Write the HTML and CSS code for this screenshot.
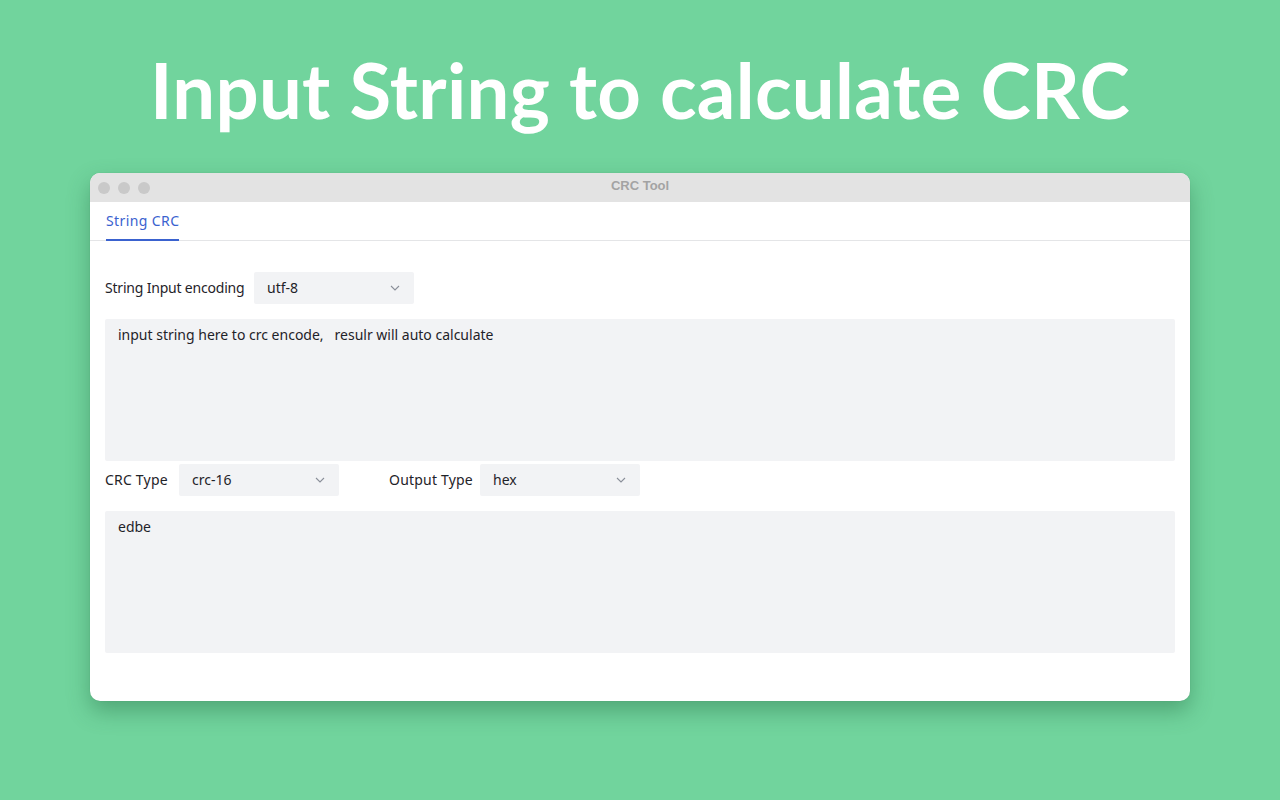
FILE: index.html
```html
<!DOCTYPE html>
<html>
<head>
<meta charset="utf-8">
<link rel="stylesheet" href="styles.css">
</head>
<body>
<div class="page">
  <h1 class="headline">Input String to calculate CRC</h1>
  <div class="window">
    <div class="titlebar">
      <div class="lights"><span class="light"></span><span class="light"></span><span class="light"></span></div>
      <div class="title">CRC Tool</div>
    </div>
    <div class="tabs">
      <div class="tab active">String CRC</div>
    </div>
    <div class="content">
      <div class="row row-first">
        <span class="label label-enc">String Input encoding</span>
        <div class="select"><span>utf-8</span>
          <svg class="chev" width="10" height="6" viewBox="0 0 10 6"><path d="M1 1l4 4 4-4" fill="none" stroke="#8a8f99" stroke-width="1.1"/></svg>
        </div>
      </div>
      <div class="area area-input">input string here to crc encode,&nbsp;&nbsp;&nbsp;resulr will auto calculate</div>
      <div class="row row-second">
        <span class="label label-crc">CRC Type</span>
        <div class="select"><span>crc-16</span>
          <svg class="chev" width="10" height="6" viewBox="0 0 10 6"><path d="M1 1l4 4 4-4" fill="none" stroke="#8a8f99" stroke-width="1.1"/></svg>
        </div>
        <span class="label label-out">Output Type</span>
        <div class="select"><span>hex</span>
          <svg class="chev" width="10" height="6" viewBox="0 0 10 6"><path d="M1 1l4 4 4-4" fill="none" stroke="#8a8f99" stroke-width="1.1"/></svg>
        </div>
      </div>
      <div class="area area-output">edbe</div>
    </div>
  </div>
</div>
</body>
</html>
```

FILE: styles.css
```css
* { box-sizing: border-box; }
html, body { margin: 0; padding: 0; }
body {
  width: 1280px;
  height: 800px;
  background: #71d49d;
  font-family: "Noto Sans", "Liberation Sans", sans-serif;
  overflow: hidden;
}
.page {
  display: flex;
  flex-direction: column;
  align-items: center;
}
.headline {
  margin: 44px 0 0 0;
  height: 129px;
  font-family: Lato, "Noto Sans", sans-serif;
  font-weight: 700;
  font-size: 76px;
  line-height: 92px;
  color: #ffffff;
  letter-spacing: 0.3px;
}
.window {
  width: 1100px;
  height: 528px;
  background: #ffffff;
  border-radius: 10px;
  overflow: hidden;
  box-shadow: 0 10px 22px rgba(40, 110, 70, 0.45), 0 0 1px rgba(0,0,0,0.2);
}
.titlebar {
  height: 29px;
  background: #e3e3e3;
  display: flex;
  align-items: center;
  position: relative;
}
.lights {
  display: flex;
  gap: 8px;
  padding-left: 8px;
}
.light {
  width: 12px;
  height: 12px;
  border-radius: 50%;
  background: #c9c9c9;
}
.title {
  position: absolute;
  left: 0;
  right: 0;
  text-align: center;
  font-family: "Liberation Sans", Arial, sans-serif;
  font-size: 13px;
  font-weight: 700;
  color: #a3a3a3;
  top: 5px;
}
.tabs {
  height: 39px;
  border-bottom: 1px solid #e4e5e7;
  padding-left: 16px;
  display: flex;
}
.tab {
  font-size: 14px;
  color: #3a62cf;
  padding-top: 9px;
  border-bottom: 2px solid #3a62cf;
  height: 39px;
  letter-spacing: 0.4px;
}
.content {
  padding: 31px 15px 0 15px;
}
.row {
  display: flex;
  align-items: center;
  height: 32px;
}
.label {
  font-size: 14px;
  color: #1f2329;
  white-space: nowrap;
  flex: none;
  margin-top: -1px;
}
.label-enc { width: 149px; letter-spacing: -0.2px; }
.label-crc { width: 74px; letter-spacing: 0.2px; }
.label-out { width: 91px; margin-left: 50px; letter-spacing: 0.2px; }
.select {
  width: 160px;
  height: 32px;
  background: #f2f3f5;
  border-radius: 2px;
  display: flex;
  align-items: center;
  justify-content: space-between;
  padding: 0 14px 0 13px;
  font-size: 14px;
  color: #1f2329;
}
.select span { margin-top: -1px; }
.area {
  background: #f2f3f5;
  height: 142px;
  padding: 6px 13px;
  font-size: 14px;
  color: #1f2329;
  border-radius: 2px;
}
.area-input { margin-top: 15px; }
.row-second { margin-top: 3px; }
.area-output { margin-top: 15px; }
```
